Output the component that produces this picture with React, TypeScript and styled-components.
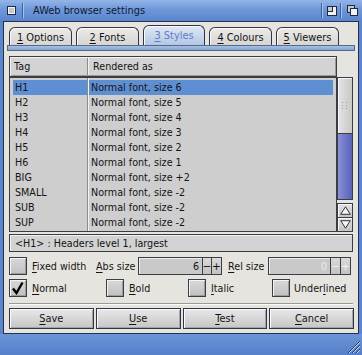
import React from 'react';
import styled, { createGlobalStyle } from 'styled-components';

const Global = createGlobalStyle`
  html, body { margin: 0; padding: 0; background: #5a86cd; }
  body {
    font-family: 'DejaVu Sans', 'Noto Sans', sans-serif;
    font-size: 9.6px;
    color: #141414;
  }
  u { text-decoration-thickness: 1px; text-underline-offset: 2px; }
`;

// --- window frame ---
const Window = styled.div`
  width: 362px;
  height: 355px;
  display: flex;
  flex-direction: column;
  background: #5a86cd;
  overflow: hidden;
`;

const TitleBar = styled.div`
  height: 21px;
  flex: none;
  display: flex;
  align-items: center;
  background: linear-gradient(#93b5e8, #6e97d9 45%, #5a86cf);
`;

const GadgetCell = styled.div<{ $w: number }>`
  width: ${(p) => p.$w}px;
  height: 21px;
  display: flex;
  align-items: center;
  justify-content: center;
`;

const GadgetSep = styled.div`
  width: 1px;
  height: 15px;
  background: #3e5f9a;
  border-right: 1px solid #a8c4ee;
`;

const Title = styled.div`
  flex: 1;
  padding-left: 9px;
  font-size: 9.8px;
  color: #0e1a33;
`;

const Body = styled.div`
  flex: none;
  height: 311px;
  margin: 0 3px;
  border: 1px solid #26304a;
  background: #e6e4df;
  padding: 0 3px;
  display: flex;
  flex-direction: column;
`;

const BottomBar = styled.div`
  flex: 1;
  display: flex;
  justify-content: flex-end;
  align-items: flex-end;
  padding: 0 2px 2px 0;
  background: linear-gradient(#6a95d8, #5580c9);
`;

// --- tabs ---
const TabRow = styled.div`
  display: flex;
  gap: 4px;
  height: 20px;
  margin-top: 3px;
  padding-left: 2px;
  align-items: flex-end;
`;

const Tab = styled.div<{ $active?: boolean }>`
  box-sizing: border-box;
  width: ${(p) => (p.$active ? 62 : 63)}px;
  height: ${(p) => (p.$active ? 20 : 18)}px;
  border: 1px solid #30354a;
  border-bottom: none;
  border-radius: 6px 6px 0 0;
  display: flex;
  align-items: center;
  justify-content: center;
  padding-top: ${(p) => (p.$active ? 0 : 1)}px;
  font-size: 9.8px;
  color: ${(p) => (p.$active ? '#5b7fc9' : '#141414')};
  background: ${(p) =>
    p.$active
      ? 'linear-gradient(#e0e8f4, #b4c6e4)'
      : 'linear-gradient(#ecebe8, #d6d5d2)'};
  box-shadow: inset 1px 1px 0 #fbfbfb;
`;

const TabStrip = styled.div`
  height: 6px;
  box-sizing: border-box;
  border: 1px solid #55698f;
  background: linear-gradient(#a9c0e2, #86a2d0);
`;

const Content = styled.div`
  display: flex;
  flex-direction: column;
  padding: 0 2px;
  margin-top: 5px;
`;

// --- list view ---
const ListArea = styled.div`
  display: grid;
  grid-template-columns: 328px 16px;
  grid-template-rows: 21px 155px;
`;

const colLine = `linear-gradient(to right, transparent 77px, #8c8c8c 77px, #8c8c8c 78px, #f2f2f2 78px, #f2f2f2 79px, transparent 79px)`;

const ListHeader = styled.div`
  box-sizing: border-box;
  border: 1px solid #3c3c44;
  background: ${colLine}, #d3d3d3;
  box-shadow: inset 1px 1px 0 #f4f4f4, inset -1px -1px 0 #9a9a9a;
  display: grid;
  grid-template-columns: 79px 1fr;
  align-items: center;
`;

const HeadCell = styled.div`
  padding-left: 4px;
`;

const ListBody = styled.div`
  box-sizing: border-box;
  border: 1px solid #3c3c44;
  background: ${colLine}, #cecece;
  padding: 2px 3px 0 3px;
  display: flex;
  flex-direction: column;
`;

const Row = styled.div`
  height: 15px;
  display: grid;
  grid-template-columns: 74px 1fr;
  column-gap: 2px;
`;

const Cell = styled.div<{ $sel?: boolean }>`
  display: flex;
  align-items: center;
  padding-left: 2px;
  background: ${(p) => (p.$sel ? '#5f8fd3' : 'transparent')};
`;

const Scroll = styled.div`
  grid-column: 2;
  grid-row: 2;
  display: flex;
  flex-direction: column;
`;

const Knob = styled.div`
  height: 57px;
  box-sizing: border-box;
  border: 1px solid #3c3c44;
  background: linear-gradient(to right, #e4e4e4, #c8c8c8);
  box-shadow: inset 1px 1px 0 #f6f6f6;
  display: flex;
  align-items: center;
  justify-content: center;
`;

const Track = styled.div`
  flex: 1;
  box-sizing: border-box;
  border: 1px solid #3c3c44;
  border-top: none;
  background: linear-gradient(to right, #8890d8, #5a62b8);
  margin-bottom: 3px;
`;

const ArrowBtn = styled.div`
  height: 15px;
  box-sizing: border-box;
  border: 1px solid #3c3c44;
  background: linear-gradient(#e2e2e2, #c4c4c4);
  box-shadow: inset 1px 1px 0 #f6f6f6;
  display: flex;
  align-items: center;
  justify-content: center;
  & + & { border-top: none; height: 14px; }
`;

// --- fields ---
const Info = styled.div`
  margin-top: 2px;
  height: 18px;
  box-sizing: border-box;
  border: 1px solid #3c3c44;
  background: #d2d2d2;
  box-shadow: inset 1px 1px 0 #f2f2f2;
  display: flex;
  align-items: center;
  padding-left: 5px;
`;

const OptRow = styled.div<{ $top: number }>`
  margin-top: ${(p) => p.$top}px;
  height: 18px;
  display: flex;
  align-items: center;
`;

const Check = styled.div`
  width: 18px;
  height: 18px;
  flex: none;
  box-sizing: border-box;
  border: 1px solid #3c3c44;
  background: linear-gradient(#d8d8d8, #c0c0c0);
  box-shadow: inset 1px 1px 0 #f4f4f4, inset -1px -1px 0 #9c9c9c;
  display: flex;
  align-items: center;
  justify-content: center;
`;

const Label = styled.div<{ $w?: number; $ml?: number }>`
  ${(p) => (p.$w ? `width: ${p.$w}px;` : '')}
  margin-left: ${(p) => p.$ml ?? 0}px;
  flex: none;
  white-space: nowrap;
`;

const Field = styled.div<{ $w: number; $dim?: boolean }>`
  width: ${(p) => p.$w}px;
  height: 18px;
  box-sizing: border-box;
  border: 1px solid #3c3c44;
  background: #c9c9c9;
  box-shadow: inset 1px 1px 0 #ececec;
  display: flex;
  align-items: center;
  justify-content: flex-end;
  padding-right: 3px;
  color: ${(p) => (p.$dim ? '#ededed' : '#141414')};
`;

const Step = styled.div<{ $w: number; $dim?: boolean }>`
  width: ${(p) => p.$w}px;
  height: 18px;
  box-sizing: border-box;
  border: 1px solid #3c3c44;
  border-left: none;
  background: linear-gradient(#dadada, #c2c2c2);
  display: flex;
  align-items: center;
  justify-content: center;
  font-size: 10.5px;
  color: ${(p) => (p.$dim ? '#f0f0f0' : '#141414')};
`;

const StyleGrid = styled.div`
  margin-top: 4px;
  height: 18px;
  display: grid;
  grid-template-columns: 97px 82px 84px 1fr;
`;

const StyleOpt = styled.div<{ $gap: number }>`
  display: flex;
  align-items: center;
  gap: ${(p) => p.$gap}px;
`;

const Separator = styled.div`
  margin-top: 6px;
  height: 1px;
  background: #9c9a96;
  border-bottom: 1px solid #fbfbfa;
`;

const ButtonRow = styled.div`
  margin-top: 3px;
  display: grid;
  grid-template-columns: repeat(4, 1fr);
  gap: 2px;
  margin-right: -1px;
`;

const Button = styled.div`
  height: 21px;
  box-sizing: border-box;
  border: 1px solid #30354a;
  background: linear-gradient(#e8e8e8, #c6c6c6);
  box-shadow: inset 1px 1px 0 #fafafa, inset -1px -1px 0 #a4a4a4;
  display: flex;
  align-items: center;
  justify-content: center;
  font-size: 9.8px;
`;

const rows: [string, string][] = [
  ['H1', 'Normal font, size 6'],
  ['H2', 'Normal font, size 5'],
  ['H3', 'Normal font, size 4'],
  ['H4', 'Normal font, size 3'],
  ['H5', 'Normal font, size 2'],
  ['H6', 'Normal font, size 1'],
  ['BIG', 'Normal font, size +2'],
  ['SMALL', 'Normal font, size -2'],
  ['SUB', 'Normal font, size -2'],
  ['SUP', 'Normal font, size -2'],
];

const tabs = [
  ['1', ' Options'],
  ['2', ' Fonts'],
  ['3', ' Styles'],
  ['4', ' Colours'],
  ['5', ' Viewers'],
];

const App: React.FC = () => {
  return (
    <Window>
      <Global />
      <TitleBar>
        <GadgetCell $w={22}>
          <svg width="9" height="9" viewBox="0 0 9 9">
            <rect x="0.5" y="0.5" width="8" height="8" fill="#f4f4f4" stroke="#1c2a48" />
            <rect x="2" y="2" width="5" height="5" fill="#c8c8c8" />
          </svg>
        </GadgetCell>
        <GadgetSep />
        <Title>AWeb browser settings</Title>
        <GadgetSep />
        <GadgetCell $w={17}>
          <svg width="10" height="10" viewBox="0 0 10 10">
            <rect x="0.5" y="0.5" width="9" height="9" fill="#f2f2f2" stroke="#1c2a48" />
            <rect x="0.5" y="0.5" width="5" height="5" fill="#c8c8c8" stroke="#1c2a48" />
          </svg>
        </GadgetCell>
        <GadgetSep />
        <GadgetCell $w={20}>
          <svg width="11" height="11" viewBox="0 0 11 11">
            <rect x="0.5" y="0.5" width="7" height="7" fill="#c8c8c8" stroke="#1c2a48" />
            <rect x="3.5" y="3.5" width="7" height="7" fill="#f2f2f2" stroke="#1c2a48" />
          </svg>
        </GadgetCell>
      </TitleBar>

      <Body>
        <TabRow>
          {tabs.map(([k, rest]) => (
            <Tab key={k} $active={k === '3'}>
              <span>
                <u>{k}</u>
                {rest}
              </span>
            </Tab>
          ))}
        </TabRow>
        <TabStrip />

        <Content>
          <ListArea>
            <ListHeader>
              <HeadCell>Tag</HeadCell>
              <HeadCell>Rendered as</HeadCell>
            </ListHeader>
            <div />
            <ListBody>
              {rows.map(([tag, desc], i) => (
                <Row key={tag}>
                  <Cell $sel={i === 0}>{tag}</Cell>
                  <Cell $sel={i === 0}>{desc}</Cell>
                </Row>
              ))}
            </ListBody>
            <Scroll>
              <Knob>
                <svg width="6" height="10" viewBox="0 0 6 10">
                  {[1, 4, 7].map((y) => (
                    <g key={y}>
                      <rect x="0" y={y} width="1" height="1" fill="#9a9a9a" />
                      <rect x="4" y={y} width="1" height="1" fill="#9a9a9a" />
                    </g>
                  ))}
                </svg>
              </Knob>
              <Track />
              <ArrowBtn>
                <svg width="11" height="9" viewBox="0 0 11 9">
                  <path d="M5.5 0.8 L10.3 8.3 L0.7 8.3 Z" fill="#f4f4f4" stroke="#333" strokeWidth="1" />
                </svg>
              </ArrowBtn>
              <ArrowBtn>
                <svg width="11" height="9" viewBox="0 0 11 9">
                  <path d="M0.7 0.7 L10.3 0.7 L5.5 8.2 Z" fill="#f4f4f4" stroke="#333" strokeWidth="1" />
                </svg>
              </ArrowBtn>
            </Scroll>
          </ListArea>

          <Info>&lt;H1&gt; : Headers level 1, largest</Info>

          <OptRow $top={5}>
            <Check />
            <Label $w={64} $ml={5}>
              <u>F</u>ixed width
            </Label>
            <Label $w={42}>
              <u>A</u>bs size
            </Label>
            <Field $w={65}>6</Field>
            <Step $w={9}>−</Step>
            <Step $w={10}>+</Step>
            <Label $w={40} $ml={6}>
              <u>R</u>el size
            </Label>
            <Field $w={63} $dim>
              0
            </Field>
            <Step $w={10} $dim>
              −
            </Step>
            <Step $w={10} $dim>
              +
            </Step>
          </OptRow>

          <StyleGrid>
            <StyleOpt $gap={5}>
              <Check>
                <svg width="14" height="14" viewBox="0 0 14 14">
                  <path d="M2 7.5 L5.5 12 L11.5 1.5" fill="none" stroke="#000" strokeWidth="2.4" />
                </svg>
              </Check>
              <Label>
                <u>N</u>ormal
              </Label>
            </StyleOpt>
            <StyleOpt $gap={5}>
              <Check />
              <Label>
                <u>B</u>old
              </Label>
            </StyleOpt>
            <StyleOpt $gap={5}>
              <Check />
              <Label>
                <u>I</u>talic
              </Label>
            </StyleOpt>
            <StyleOpt $gap={4}>
              <Check />
              <Label>
                Under<u>l</u>ined
              </Label>
            </StyleOpt>
          </StyleGrid>

          <Separator />

          <ButtonRow>
            <Button>
              <span>
                <u>S</u>ave
              </span>
            </Button>
            <Button>
              <span>
                <u>U</u>se
              </span>
            </Button>
            <Button>
              <span>
                <u>T</u>est
              </span>
            </Button>
            <Button>
              <span>
                <u>C</u>ancel
              </span>
            </Button>
          </ButtonRow>
        </Content>
      </Body>

      <BottomBar>
        <svg width="12" height="12" viewBox="0 0 12 12">
          {[0, 4, 8].map((o) => (
            <g key={o}>
              <line x1={o} y1="12" x2="12" y2={o} stroke="#2a3a60" strokeWidth="1" />
              <line x1={o + 1} y1="12" x2="12" y2={o + 1} stroke="#c8d8f4" strokeWidth="1" />
            </g>
          ))}
        </svg>
      </BottomBar>
    </Window>
  );
};

export default App;
